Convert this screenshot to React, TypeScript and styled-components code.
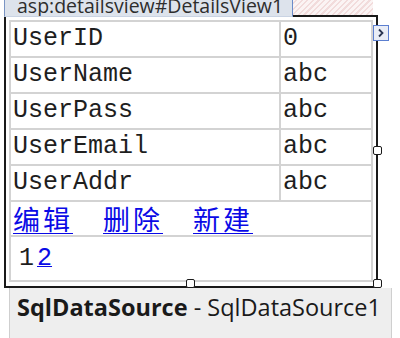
import React from "react";
import styled, { createGlobalStyle } from "styled-components";

const Global = createGlobalStyle`
  html, body { margin: 0; padding: 0; background: #ffffff; }
  body { width: 400px; height: 338px; overflow: hidden; }
`;

const Page = styled.div`
  position: relative;
  width: 400px;
  height: 338px;
`;

const Header = styled.div`
  display: flex;
  width: 374px;
  height: 17px;
  margin-left: 4px;
`;

const Tab = styled.div`
  width: 289px;
  height: 17px;
  box-sizing: border-box;
  background: #dde3ec;
  border-left: 1px solid #7a95c4;
  border-right: 1px solid #6b8cc9;
  border-bottom: 1px solid #c9d3e3;
  padding-left: 12px;
  font-family: "Open Sans", "Noto Sans", sans-serif;
  font-size: 19.5px;
  line-height: 11px;
  color: #2d2d2d;
  overflow: hidden;
  white-space: nowrap;
`;

const HatchLane = styled.div`
  flex: 1;
  height: 17px;
  box-sizing: border-box;
  border-bottom: 2px solid #1a1a1a;
`;

const Hatch = styled.div`
  width: 80px;
  height: 15px;
  background: repeating-linear-gradient(
    -45deg,
    #f2dcdc 0px,
    #f2dcdc 1.5px,
    #fbf4f4 1.5px,
    #fbf4f4 4px
  );
`;

const Frame = styled.div`
  position: relative;
  width: 374px;
  box-sizing: border-box;
  margin-left: 4px;
  border-left: 2px solid #1a1a1a;
  border-right: 2px solid #1a1a1a;
  border-bottom: 2px solid #1a1a1a;
  padding: 3px 3px 4px 3px;
`;

const Grid = styled.table`
  width: 364px;
  border-collapse: collapse;
  border: 2px solid #d3d3d3;
  font-family: "Liberation Mono", "DejaVu Sans Mono", monospace;
  font-size: 25px;
  color: #1e1e1e;
`;

const Cell = styled.td<{ $w?: number }>`
  border: 2px solid #d3d3d3;
  height: 36px;
  padding: 0 0 0 2px;
  box-sizing: border-box;
  width: ${(p) => (p.$w ? `${p.$w}px` : "auto")};
  white-space: nowrap;
  vertical-align: middle;
  line-height: 30px;
`;

const LinkCell = styled.td`
  border: 2px solid #d3d3d3;
  height: 35px;
  box-sizing: border-box;
  padding: 0 0 0 2px;
  vertical-align: middle;
  font-family: "Noto Sans CJK SC", sans-serif;
  font-size: 27px;
  line-height: 30px;
`;

const CmdLink = styled.a`
  color: #0a0ae6;
  text-decoration: underline;
  text-decoration-thickness: 1px;
  text-underline-offset: 3px;
  margin-right: 30px;
  letter-spacing: 3px;
`;

const PagerCell = styled.td`
  border: 2px solid #d3d3d3;
  height: 45px;
  box-sizing: border-box;
  padding: 0 0 0 8px;
  vertical-align: middle;
  line-height: 30px;
`;

const PageNum = styled.span<{ $link?: boolean }>`
  color: ${(p) => (p.$link ? "#0a0ae6" : "#1e1e1e")};
  text-decoration: ${(p) => (p.$link ? "underline" : "none")};
  text-decoration-thickness: 1px;
  margin-right: 3px;
`;

const Handle = styled.div<{ $x: number; $y: number }>`
  position: absolute;
  left: ${(p) => p.$x}px;
  top: ${(p) => p.$y}px;
  width: 9px;
  height: 9px;
  box-sizing: border-box;
  background: #ffffff;
  border: 1px solid #1a1a1a;
  border-radius: 2px;
`;

const SmartTag = styled.div`
  position: absolute;
  left: 373px;
  top: 25px;
  width: 16px;
  height: 16px;
  box-sizing: border-box;
  border: 1px solid #5c7fd0;
  background: #e9edf6;
  display: flex;
  align-items: center;
  justify-content: center;
`;

const Source = styled.div`
  width: 383px;
  height: 53px;
  box-sizing: border-box;
  margin-left: 9px;
  background: #eeeeee;
  border: 1px solid #cfcfcf;
  border-top: none;
  padding: 3px 0 0 7px;
  font-family: "Open Sans", "Noto Sans", sans-serif;
  font-size: 23.5px;
  line-height: 32px;
  color: #1a1a1a;
  white-space: nowrap;
`;

const Bold = styled.span`
  font-weight: 700;
`;

const rows: [string, string][] = [
  ["UserID", "0"],
  ["UserName", "abc"],
  ["UserPass", "abc"],
  ["UserEmail", "abc"],
  ["UserAddr", "abc"],
];

export default function App() {
  return (
    <Page>
      <Global />
      <Header>
        <Tab>asp:detailsview#DetailsView1</Tab>
        <HatchLane>
          <Hatch />
        </HatchLane>
      </Header>
      <Frame>
        <Grid>
          <tbody>
            {rows.map(([k, v]) => (
              <tr key={k}>
                <Cell $w={270}>{k}</Cell>
                <Cell>{v}</Cell>
              </tr>
            ))}
            <tr>
              <LinkCell colSpan={2}>
                <CmdLink href="#">编辑</CmdLink>
                <CmdLink href="#">删除</CmdLink>
                <CmdLink href="#">新建</CmdLink>
              </LinkCell>
            </tr>
            <tr>
              <PagerCell colSpan={2}>
                <PageNum>1</PageNum>
                <PageNum $link>2</PageNum>
              </PagerCell>
            </tr>
          </tbody>
        </Grid>
      </Frame>
      <Source>
        <Bold>SqlDataSource</Bold> - SqlDataSource1
      </Source>
      <SmartTag>
        <svg width="8" height="10" viewBox="0 0 8 10">
          <path d="M2 1.5 L5.5 5 L2 8.5" fill="none" stroke="#2a3550" strokeWidth="1.8" />
        </svg>
      </SmartTag>
      <Handle $x={373} $y={146} />
      <Handle $x={186} $y={279} />
      <Handle $x={373} $y={279} />
    </Page>
  );
}
